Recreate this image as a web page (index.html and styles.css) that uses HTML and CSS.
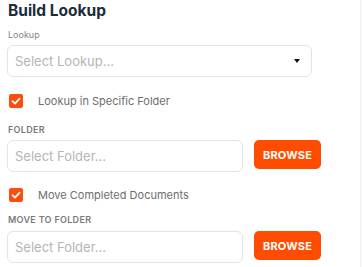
FILE: index.html
```html
<!DOCTYPE html>
<html lang="en">
<head>
  <meta charset="UTF-8">
  <meta name="viewport" content="width=device-width, initial-scale=1.0">
  <title>Build Lookup</title>
  <link rel="stylesheet" href="styles.css">
</head>
<body>
  <div class="panel">
    <h1 class="title">Build Lookup</h1>

    <!-- Lookup select -->
    <label class="field-label">Lookup</label>
    <div class="select-box">
      <span class="placeholder">Select Lookup...</span>
      <span class="caret"></span>
    </div>

    <!-- Folder -->
    <div class="check-row">
      <span class="checkbox">
        <svg viewBox="0 0 14 14" width="14" height="14"><path d="M3.5 7.2 L6 9.6 L10.6 4.6" fill="none" stroke="#fff" stroke-width="1.8" stroke-linecap="round" stroke-linejoin="round"/></svg>
      </span>
      <span class="check-label">Lookup in Specific Folder</span>
    </div>
    <label class="field-label caps">FOLDER</label>
    <div class="folder-row">
      <div class="input-box"><span class="placeholder">Select Folder...</span></div>
      <button class="btn">BROWSE</button>
    </div>

    <!-- Move to folder -->
    <div class="check-row second">
      <span class="checkbox">
        <svg viewBox="0 0 14 14" width="14" height="14"><path d="M3.5 7.2 L6 9.6 L10.6 4.6" fill="none" stroke="#fff" stroke-width="1.8" stroke-linecap="round" stroke-linejoin="round"/></svg>
      </span>
      <span class="check-label">Move Completed Documents</span>
    </div>
    <label class="field-label caps">MOVE TO FOLDER</label>
    <div class="folder-row">
      <div class="input-box"><span class="placeholder">Select Folder...</span></div>
      <button class="btn">BROWSE</button>
    </div>
  </div>
</body>
</html>
```

FILE: styles.css
```css
* {
  box-sizing: border-box;
  margin: 0;
  padding: 0;
}

body {
  font-family: Inter, 'Noto Sans', sans-serif;
  background-color: #fff;
  color: #333;
}

.panel {
  width: 361px;
  height: 267px;
  padding: 2px 0 0 7px;
  border-right: 1px solid #f0f0f0;
}

.title {
  font-size: 15.5px;
  font-weight: 700;
  color: #1c2b3b;
  line-height: 18px;
  margin-left: 1px;
}

.field-label {
  display: block;
  font-size: 9px;
  color: #858585;
  line-height: 12px;
  margin: 9px 0 4px 1px;
}

.field-label.caps {
  font-weight: 600;
  color: #7a7a7a;
  letter-spacing: 0.3px;
  margin-top: 16px;
}

.select-box,
.input-box {
  height: 32px;
  border: 1px solid #e3e3e3;
  border-radius: 6px;
  display: flex;
  align-items: center;
  padding: 0 7px;
}

.select-box {
  width: 305px;
  justify-content: space-between;
  padding-right: 11px;
}

.placeholder {
  font-size: 13px;
  color: #b5b5b5;
}

.caret {
  width: 0;
  height: 0;
  border-left: 3.5px solid transparent;
  border-right: 3.5px solid transparent;
  border-top: 4px solid #111;
}

.check-row {
  display: flex;
  align-items: center;
  margin: 17px 0 0 2px;
  height: 14px;
}

.check-row.second {
  margin-top: 16px;
}

.second + .caps {
  margin-top: 12px;
  margin-bottom: 5px;
}

.checkbox {
  width: 14px;
  height: 14px;
  background-color: #fe4c0c;
  border-radius: 2px;
  display: flex;
}

.check-label {
  font-size: 11px;
  color: #6e6e6e;
  margin-left: 15px;
}

.folder-row {
  display: flex;
  align-items: flex-start;
  gap: 11px;
}

.input-box {
  width: 236px;
}

.btn {
  background-color: #fe4c00;
  color: #fff;
  border: none;
  border-radius: 5px;
  width: 67px;
  height: 29px;
  font-family: Inter, 'Noto Sans', sans-serif;
  font-size: 11px;
  font-weight: 700;
  letter-spacing: 0.2px;
  cursor: pointer;
}
```
